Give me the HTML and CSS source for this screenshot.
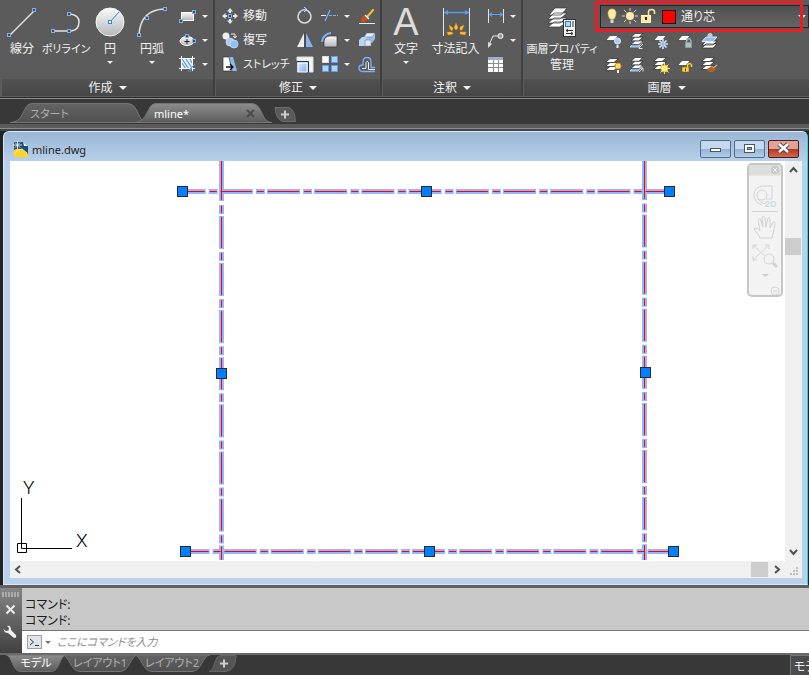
FILE: index.html
```html
<!DOCTYPE html>
<html lang="ja">
<head>
    <meta charset="utf-8">
    <title>mline.dwg</title>
    <link rel="stylesheet" href="styles.css">
</head>
<body>
    <!-- shared shapes -->
    <svg class="defs" width="0" height="0">
        <defs>
            <linearGradient id="silver" x1="0" y1="0" x2="0" y2="1"><stop offset="0" stop-color="#fafafa"/><stop offset="1" stop-color="#b4b6ba"/></linearGradient>
            <linearGradient id="tabOff" x1="0" y1="0" x2="0" y2="1"><stop offset="0" stop-color="#646464"/><stop offset="1" stop-color="#505050"/></linearGradient>
            <linearGradient id="tabOn" x1="0" y1="0" x2="0" y2="1"><stop offset="0" stop-color="#8c8c8c"/><stop offset="1" stop-color="#5c5c5c"/></linearGradient>
            <linearGradient id="sky" x1="0" y1="0" x2="1" y2="1"><stop offset="0" stop-color="#dcecff"/><stop offset="1" stop-color="#82aee6"/></linearGradient>
            <symbol id="pt" viewBox="0 0 4 4"><rect x="0.5" y="0.5" width="3" height="3" fill="#4b4b4b" stroke="#78b0ff"/></symbol>
            <symbol id="sheet" viewBox="0 0 14 6"><path d="M5 .5H13.5L9 5.5H.5Z" fill="#fff" stroke="#222" stroke-width=".6"/></symbol>
            <symbol id="sheets" viewBox="0 0 14 13">
                <path d="M5 8.500H13.500L9 12.500H.5Z" fill="#fff" stroke="#222" stroke-width=".7"/>
                <path d="M5 4.500H13.500L9 8.500H.5Z" fill="#fff" stroke="#222" stroke-width=".7"/>
                <path d="M5 .5H13.500L9 4.500H.5Z" fill="#fff" stroke="#222" stroke-width=".7"/>
            </symbol>
            <symbol id="tab" viewBox="0 0 138 20"><path d="M0 19.500C10 19 11 13 15 6Q17 .5 23 .5H118Q123 .5 126 6C130 14 131 19 138 19.500Z"/></symbol>
            <symbol id="ltab" viewBox="0 0 76 17" preserveAspectRatio="none"><path d="M0 0C8 1 8 16 18 16.500H58C68 16 68 1 76 0Z"/></symbol>
        </defs>
    </svg>

    <div class="ribbon">
        <section class="panel draw">
            <div class="tools">
                <button class="big">
                    <svg width="32" height="32"><path d="M4 29L28 5" stroke="#e4e4e4" stroke-width="1.500"/><use href="#pt" x="1" y="27" width="4" height="4"/><use href="#pt" x="26" y="2" width="4" height="4"/></svg>
                    <span>線分</span>
                </button>
                <button class="big">
                    <svg width="32" height="32"><path d="M2 25H21Q29 24 29 16Q29 9 20 8" fill="none" stroke="#e4e4e4" stroke-width="1.500"/><use href="#pt" x="1" y="23" width="4" height="4"/><use href="#pt" x="17" y="23" width="4" height="4"/><use href="#pt" x="17" y="6" width="4" height="4"/></svg>
                    <span class="kana">ポリライン</span>
                </button>
                <button class="big">
                    <svg width="32" height="32"><circle cx="16" cy="16" r="14" fill="url(#silver)" stroke="#f4f4f4"/><path d="M16 16L25 6" stroke="#3c7fe0"/><rect x="14.500" y="14.500" width="3" height="3" fill="#fff" stroke="#3c7fe0"/></svg>
                    <span>円</span><i class="caret"></i>
                </button>
                <button class="big">
                    <svg width="32" height="32"><path d="M3 28Q5 4 28 3" fill="none" stroke="#e4e4e4" stroke-width="1.500"/><use href="#pt" x="1" y="27" width="4" height="4"/><use href="#pt" x="9" y="10" width="4" height="4"/><use href="#pt" x="27" y="1" width="4" height="4"/></svg>
                    <span>円弧</span><i class="caret"></i>
                </button>
                <div class="stack">
                    <button class="small"><svg width="18" height="18"><rect x="2.500" y="5.500" width="12" height="8" fill="url(#silver)" stroke="#fff"/><use href="#pt" x="0" y="12" width="4" height="4"/><use href="#pt" x="13" y="3" width="4" height="4"/></svg><i class="caret"></i></button>
                    <button class="small"><svg width="18" height="18"><ellipse cx="8" cy="10" rx="7" ry="4.500" fill="url(#silver)" stroke="#fff"/><path d="M8 8v5M5.500 10.500h5" stroke="#222"/><use href="#pt" x="6" y="3" width="4" height="4"/><use href="#pt" x="13" y="8" width="4" height="4"/></svg><i class="caret"></i></button>
                    <button class="small"><svg width="18" height="18"><rect x="3" y="4" width="10" height="10" fill="#e8f1ff"/><path d="M3 8L7 14M3 4L10 14M7 4L13 13M11 4L13 8" stroke="#6297e6" stroke-width="1.300"/><path d="M0 3.500H16M2.500 1V16M13.500 1V16M0 13.500H16" stroke="#fff"/><path d="M9 16L16 9M11 17L13 12" stroke="#6297e6"/></svg><i class="caret"></i></button>
                </div>
            </div>
            <button class="title">作成<i class="caret wide"></i></button>
        </section>

        <section class="panel modify">
            <div class="tools">
                <div class="stack labels">
                    <button class="small"><svg width="18" height="18"><path d="M9 1L12 4.500H10V6H8V4.500H6ZM9 17L6 13.500H8V12H10V13.500H12ZM1 9L4.500 6V8H6V10H4.500V12ZM17 9L13.500 12V10H12V8H13.500V6Z" fill="#e8e8e8"/><rect x="7.500" y="7.500" width="3" height="3" fill="#444" stroke="#78b0ff"/></svg><span>移動</span></button>
                    <button class="small"><svg width="18" height="18"><circle cx="5" cy="5" r="3.500" fill="#eee"/><circle cx="9" cy="11" r="4" fill="#a9ccfa" stroke="#d8e8ff" stroke-width=".7"/><circle cx="13" cy="13" r="4" fill="#8ebcf5" stroke="#d8e8ff" stroke-width=".7"/><path d="M10 3H14V7M12 5L14 7L16 5" fill="none" stroke="#eee"/></svg><span>複写</span></button>
                    <button class="small"><svg width="18" height="18"><path d="M2 2H8V16H2Z" fill="#fff"/><path d="M8 2H12L16 16H8Z" fill="#8db9f0"/><path d="M2 2H8L11 16H2Z" fill="#fff" stroke="#333" stroke-width=".7"/><path d="M5 12H12M9 9L12 12L9 15" fill="none" stroke="#111" stroke-width="1.300"/></svg><span class="kana">ストレッチ</span></button>
                </div>
                <div class="stack">
                    <button class="small"><svg width="18" height="18"><path d="M5 4A6.500 6.500 0 1 0 12 4" fill="none" stroke="#ddd" stroke-width="1.500"/><path d="M5 4Q8 1.500 12 4" fill="none" stroke="#aaccff" stroke-width="1.500"/><path d="M8 0L11 2.500L8 5" fill="none" stroke="#ddd"/></svg></button>
                    <button class="small"><svg width="18" height="18"><path d="M8 2V16H1Z" fill="#eee"/><path d="M10 2V16H17Z" fill="#85b5f2"/><path d="M9 1V17" stroke="#333" stroke-width=".6"/></svg></button>
                    <button class="small"><svg width="18" height="18"><rect x="1" y="2" width="16" height="15" fill="#8db9f0"/><path d="M1 2H17V17H13V6H1Z" fill="#f4f4f4" stroke="#ddd"/><rect x="2" y="8" width="9" height="9" fill="url(#sky)" stroke="#fff"/><path d="M1 6.500H12.500V17" fill="none" stroke="#333"/></svg></button>
                </div>
                <div class="stack">
                    <button class="small"><svg width="18" height="18"><path d="M0 8.500H5" stroke="#eee"/><path d="M8 8.500H17" stroke="#78b0ff" stroke-dasharray="3 1"/><path d="M4 14L9 3" stroke="#78b0ff" stroke-width="1.200"/></svg><i class="caret"></i></button>
                    <button class="small"><svg width="18" height="18"><path d="M3 16V10Q4 5 9 5H16V16Z" fill="url(#silver)" stroke="#333" stroke-width=".7"/><path d="M1 11Q2 3 10 2" fill="none" stroke="#78b0ff" stroke-width="2"/></svg><i class="caret"></i></button>
                    <button class="small"><svg width="18" height="18"><rect x="1.500" y="1.500" width="6" height="6" fill="#fff" stroke="#ddd"/><path d="M10.500 1.500H16.500V7.500H10.500ZM1.500 10.500H7.500V16.500H1.500ZM10.500 10.500H16.500V16.500H10.500Z" fill="#b3d3ff" stroke="#5d9bed"/></svg><i class="caret"></i></button>
                </div>
                <div class="stack">
                    <button class="small"><svg width="18" height="18"><path d="M1 16.500H17" stroke="#eee"/><path d="M8 9L15 1L17 3L10 11Z" fill="#f2b84b" stroke="#333" stroke-width=".5"/><path d="M6 8L10 12L7 15H3V12Z" fill="#c8501b"/><path d="M7 8L11 12" stroke="#fff" stroke-width="1.500"/></svg></button>
                    <button class="small"><svg width="18" height="18"><path d="M6 6L9 2H17V8L14 12H6Z" fill="#9ac1f4"/><path d="M6 6L9 2H17L14 6Z" fill="#e8f0fb" stroke="#5b6b80" stroke-width=".5"/><path d="M1 9L4 6H9L7 9V15H1Z" fill="#b9d4f7"/><path d="M7 9H13V15H7Z" fill="#dfe6ef" stroke="#7b8ba5" stroke-width=".6"/></svg></button>
                    <button class="small"><svg width="18" height="18"><path d="M1 12.500Q1 10 5 10V7Q5 2.500 9 2.500T13 7V12.500H17M1 12.500Q1 16.500 5 16.500H17" fill="none" stroke="#78b0ff" stroke-width="1.300"/><path d="M4 13.500H8V7.500Q9 5 10.500 7.500V14.500H17" fill="none" stroke="#eee"/></svg></button>
                </div>
            </div>
            <button class="title">修正<i class="caret wide"></i></button>
        </section>

        <section class="panel annotate">
            <div class="tools">
                <button class="big">
                    <span class="letter">A</span>
                    <span>文字</span><i class="caret"></i>
                </button>
                <button class="big">
                    <svg width="32" height="32"><path d="M3.500 2V30M29.500 2V30" stroke="#e4e4e4"/><path d="M4 6.500H29" stroke="#5b9cf5" stroke-width="1.500"/><path d="M4 6.500L8 4V9ZM29 6.500L25 4V9Z" fill="#5b9cf5"/><path d="M16 17L18 22L16 24L14 22ZM9 19L13 22L12 25L10 23ZM24 19L22 24L20 24L20 21ZM7 26L12 26L13 28L8 29ZM26 26L20 26L20 28L25 29Z" fill="#ffc52f" stroke="#f27f13" stroke-width=".5"/></svg>
                    <span>寸法記入</span>
                </button>
                <div class="stack">
                    <button class="small"><svg width="18" height="18"><path d="M1.500 2V16M16.500 2V16" stroke="#e4e4e4"/><path d="M2 7.500H16" stroke="#5b9cf5"/><path d="M2 7.500L5 5V10ZM16 7.500L13 5V10Z" fill="#5b9cf5"/></svg><i class="caret"></i></button>
                    <button class="small"><svg width="18" height="18"><path d="M2 14L6 5H11" fill="none" stroke="#e4e4e4"/><path d="M1 17V11L5 13Z" fill="#ddd"/><circle cx="13.500" cy="5" r="2.500" fill="#999" stroke="#fff"/></svg><i class="caret"></i></button>
                    <button class="small"><svg width="18" height="18"><rect x="1" y="2" width="15" height="15" fill="#fff"/><rect x="1" y="2" width="15" height="3" fill="#a3adc4"/><path d="M1 8.500H16M1 12.500H16M6.500 5V17M11.500 5V17" stroke="#8d8d8d"/></svg></button>
                </div>
            </div>
            <button class="title">注釈<i class="caret wide"></i></button>
        </section>

        <section class="panel layers">
            <div class="tools">
                <button class="big two">
                    <svg width="32" height="32"><path d="M8 16H21L14 21H2ZM8 12H21L14 17H2ZM8 7H21L14 13H2ZM9 2H21L15 9H3Z" fill="#fff" stroke="#333" stroke-width=".7"/><rect x="17.500" y="13.500" width="12" height="17" fill="#f3f3f3" stroke="#333"/><rect x="19.500" y="15.500" width="5" height="5" fill="#b8d4fa" stroke="#3b70c2"/><path d="M26 16H28M26 18H28M26 20H28M20 24.500H27M20 27.500H27M22 23L20 24.500L22 26M25 26L27 27.500L25 29" fill="none" stroke="#333"/></svg>
                    <span class="kana">画層プロパティ</span><span>管理</span>
                </button>
                <div class="layer-tools">
                    <div class="layer-box">
                        <svg width="18" height="18"><path d="M9 1Q13 1 13 5.500Q13 8 11 11H7Q5 8 5 5.500Q5 1 9 1Z" fill="#ffeaa1" stroke="#e3c25c" stroke-width=".6"/><path d="M7.500 11.500H10.500V15H7.500Z" fill="#d8d8d8"/></svg>
                        <svg width="18" height="18"><circle cx="9" cy="8" r="4" fill="#ffecae"/><path d="M9 0V3M9 13V16M1 8H4M14 8H17M3 2L5.500 4.500M13 12L15 14M15 2L12.500 4.500M5 12L3 14" stroke="#e0d8bd"/></svg>
                        <svg width="18" height="18"><rect x="2.500" y="7.500" width="9" height="7" fill="#ffe89b" stroke="#fff2c4"/><path d="M9.500 7V4Q9.500 1.500 12.500 1.500T15.500 4V6" fill="none" stroke="#ffe89b" stroke-width="1.500"/><path d="M7 9V12" stroke="#222" stroke-width="2"/></svg>
                        <i class="swatch"></i>
                        <select aria-label="画層"><option>通り芯</option></select>
                        <i class="caret wide"></i>
                        <div class="callout"></div>
                    </div>
                    <div class="layer-icons">
                        <button><svg width="18" height="18"><use href="#sheet" x="0" y="2" width="14" height="6"/><circle cx="12.500" cy="8" r="3" fill="#a5cbf8" stroke="#e3efff"/><path d="M12.500 12V15" stroke="#eee" stroke-width="2"/></svg></button>
                        <button><svg width="18" height="18"><path d="M5 9.500H13L9 14H1Z" fill="#70a9f3" stroke="#dce9fb" stroke-width=".8"/><use href="#sheets" x="1" y="0" width="14" height="12"/><path d="M14 11L10 15M10 12V15.500H13.500" fill="none" stroke="#ddd"/></svg></button>
                        <button><svg width="18" height="18"><use href="#sheet" x="0" y="2" width="14" height="6"/><path d="M10 6V16M5 11H15M6.500 7.500L13.500 14.500M13.500 7.500L6.500 14.500" stroke="#d8eaff" stroke-width="1.600"/><path d="M10 8V14M7 11H13" stroke="#5c94d8" stroke-width=".7"/></svg></button>
                        <button><svg width="18" height="18"><use href="#sheet" x="0" y="2" width="14" height="6"/><path d="M9.500 10V8Q12 3 14 8V10" fill="none" stroke="#a9b9b8" stroke-width="1.500"/><rect x="8" y="9" width="7" height="6" fill="#7fa09f"/><path d="M9 11H14M9 13H14" stroke="#d7e3e1"/></svg></button>
                        <button><svg width="18" height="18"><path d="M5 11H16L12 15H1ZM5 8H16L12 12H1Z" fill="#fff" stroke="#222" stroke-width=".7"/><path d="M5 4H16L12 8.500H1Z" fill="#8dbcf7" stroke="#fff" stroke-width=".8"/><circle cx="9" cy="2.500" r="2.500" fill="#c9cbd0"/></svg></button>
                        <button><svg width="18" height="18"><use href="#sheets" x="0" y="1" width="14" height="13"/><circle cx="13" cy="9" r="3" fill="#ffe15a" stroke="#f08a18"/><path d="M13 13V16" stroke="#eee" stroke-width="2"/></svg></button>
                        <button><svg width="18" height="18"><path d="M5 9.500H13L9 14H1Z" fill="#70a9f3" stroke="#dce9fb" stroke-width=".8"/><use href="#sheets" x="1" y="0" width="14" height="12"/><path d="M10 15L14 11M10.500 11H14V14.500" fill="none" stroke="#ddd"/></svg></button>
                        <button><svg width="18" height="18"><use href="#sheets" x="0" y="0" width="14" height="13"/><path d="M11.500 6V17M6 11.500H17M7.500 7.500L15.500 15.500M15.500 7.500L7.500 15.500" stroke="#ffe164"/><circle cx="11.500" cy="11.500" r="3.500" fill="#fff18a" stroke="#f2bd26"/></svg></button>
                        <button><svg width="18" height="18"><use href="#sheet" x="0" y="3" width="14" height="6"/><rect x="5" y="10" width="7" height="5" fill="#ffd23a" stroke="#7a5c00" stroke-width=".6"/><path d="M10.500 10V8Q13 5 14.500 8V10" fill="none" stroke="#ffd23a" stroke-width="1.500"/><path d="M8.500 11.500V14" stroke="#333"/></svg></button>
                        <button><svg width="18" height="18"><use href="#sheets" x="0" y="0" width="14" height="13"/><path d="M6 12L11 9L15 12L12 15L8 15Z" fill="#b86024"/><path d="M12 11L16 8" stroke="#e7a46c" stroke-width="1.500"/></svg></button>
                    </div>
                </div>
            </div>
            <button class="title">画層<i class="caret wide"></i></button>
        </section>
    </div>

    <nav class="file-tabs">
        <a class="file-tab" href="#"><svg class="tab-bg" width="138" height="20"><use href="#tab"/></svg><span class="kana">スタート</span></a>
        <a class="file-tab active" href="#"><svg class="tab-bg" width="138" height="20"><use href="#tab"/></svg><span class="latin">mline*</span><svg class="tab-close" width="9" height="9"><path d="M1 1L8 8M8 1L1 8" stroke="#4a4a4a" stroke-width="2"/></svg></a>
        <button class="add-tab" aria-label="新規"><svg width="22" height="15"><path d="M1 .5H15Q21 3 21.500 14.500H9Q2 13 1 .5Z" fill="#5a5a5a" stroke="#6e6e6e"/><path d="M7 7.500H15M11 3.500V11.500" stroke="#ccc" stroke-width="2"/></svg></button>
    </nav>

    <main class="workspace">
        <div class="window">
            <header class="window-bar">
                <svg width="16" height="16"><path d="M1 1H10L15 5V15H1Z" fill="#1f4d7c"/><path d="M10 1L15 5H11Z" fill="#e9eef4"/><path d="M1 9Q7 5 15 13V16H1Z" fill="#ffd51f"/><path d="M1 13Q5 8 9 8L14 12" fill="none" stroke="#fff1a0"/><path d="M4.500 0V8M0 4H9M2 1.500L7 6.500M7 1.500L2 6.500" stroke="#fff" stroke-width=".8"/></svg>
                <h1 class="latin">mline.dwg</h1>
                <button class="win-btn" aria-label="最小化"><svg width="13" height="13"><rect x="1.500" y="6.500" width="10" height="3" fill="#fff" stroke="#4b5664"/></svg></button>
                <button class="win-btn" aria-label="最大化"><svg width="13" height="13"><rect x="1.500" y="2.500" width="10" height="8" fill="#fff" stroke="#4b5664"/><rect x="4.500" y="5.500" width="4" height="2" fill="#8eb2d8" stroke="#4b5664"/></svg></button>
                <button class="win-btn close" aria-label="閉じる"><svg width="13" height="13"><path d="M2 2L11 10M11 2L2 10" stroke="#58484b" stroke-width="4.500"/><path d="M2 2L11 10M11 2L2 10" stroke="#fff" stroke-width="2.500"/></svg></button>
            </header>

            <div class="view">
                <div class="canvas">
                    <svg class="drawing" width="775" height="399">
                        <!-- selection glow -->
                        <g class="glow">
                            <path d="M172 30.500H660" stroke-dasharray="33.200 3 9 2" stroke-dashoffset="9.500"/>
                            <path d="M175 390.500H663" stroke-dasharray="33.100 3 9 2" stroke-dashoffset="8.500"/>
                            <path d="M211.500 0V40"/>
                            <path d="M211.500 43V399" stroke-dasharray="33.100 3 9 2" stroke-dashoffset="35.200"/>
                            <path d="M634.500 0V39"/>
                            <path d="M634.500 42V399" stroke-dasharray="33.100 3 9 2" stroke-dashoffset="35.600"/>
                        </g>
                        <!-- center lines -->
                        <g class="center">
                            <path d="M172 30.500H660" stroke-dasharray="31.200 5 7 4" stroke-dashoffset="8.500"/>
                            <path d="M175 390.500H663" stroke-dasharray="31.100 5 7 4" stroke-dashoffset="7.500"/>
                            <path d="M211.500 0V39"/>
                            <path d="M211.500 43V399" stroke-dasharray="31.100 5 7 4" stroke-dashoffset="34.200"/>
                            <path d="M634.500 0V38"/>
                            <path d="M634.500 42V399" stroke-dasharray="31.100 5 7 4" stroke-dashoffset="34.600"/>
                        </g>
                        <!-- grips -->
                        <g class="grips">
                            <rect x="167.500" y="25.500" width="10" height="10"/>
                            <rect x="411.500" y="25.500" width="10" height="10"/>
                            <rect x="654.500" y="25.500" width="10" height="10"/>
                            <rect x="206.500" y="207.500" width="10" height="10"/>
                            <rect x="630.500" y="206.500" width="10" height="10"/>
                            <rect x="170.500" y="385.500" width="10" height="10"/>
                            <rect x="414.500" y="385.500" width="10" height="10"/>
                            <rect x="658.500" y="385.500" width="10" height="10"/>
                        </g>
                        <!-- UCS icon -->
                        <path d="M11.500 337V387.500H62M7.500 382.500H16.500V391.500H7.500Z" fill="none" stroke="#000"/>
                        <text class="axis" x="13" y="333">Y</text>
                        <text class="axis" x="66" y="386">X</text>
                    </svg>

                    <div class="navbar">
                        <svg width="36" height="135">
                            <rect x="1" y="1" width="34" height="132" rx="4" fill="#f3f3f3" stroke="#c6c6c6" stroke-width="2"/>
                            <path d="M2 12.500V5Q2 2 5 2H31Q34 2 34 5V12.500Z" fill="#dedede"/>
                            <circle cx="28" cy="7" r="4" fill="#c8c8c8"/><path d="M26 5L30 9M30 5L26 9" stroke="#f5f5f5"/>
                            <g fill="none" stroke="#d2d2d2">
                                <path d="M15 42C4 39 4 23 17 23H25V36H19"/><circle cx="15" cy="32" r="5"/><path d="M11 36Q14 41 19 41"/>
                                <path d="M5 48.500H31"/>
                                <path d="M13 75C11 69 6 68 8 65Q10 64 13 68L11 57Q13 54 14 58L16 64L15 54Q17 52 18 55L19 64L21 55Q23 53 23 57L23 65L26 59Q29 58 28 62L25 75Z"/>
                                <path d="M6 82L22 97M22 82L6 97M6 86V82H10M18 82H22V86M6 93V97H10"/>
                                <circle cx="22" cy="96" r="5" fill="#f3f3f3"/><path d="M26 100L30 104" stroke-width="3"/>
                                <circle cx="28" cy="128" r="4"/><path d="M26 128H30"/>
                            </g>
                            <path d="M15 111H22L18.500 114Z" fill="#ccc"/>
                            <text x="18" y="44" class="nav-2d">2D</text>
                        </svg>
                    </div>
                </div>
                <div class="vscroll">
                    <svg width="17" height="17"><path d="M5 11L8.500 7L12 11" fill="none" stroke="#505050" stroke-width="2"/></svg>
                    <div class="vthumb"></div>
                    <svg width="17" height="17"><path d="M5 6L8.500 10L12 6" fill="none" stroke="#505050" stroke-width="2"/></svg>
                </div>
                <div class="hscroll">
                    <svg width="17" height="17"><path d="M10 5L6 8.500L10 12" fill="none" stroke="#505050" stroke-width="2"/></svg>
                    <div class="hthumb"></div>
                    <svg width="17" height="17"><path d="M7 5L11 8.500L7 12" fill="none" stroke="#505050" stroke-width="2"/></svg>
                </div>
                <svg class="sizer" width="17" height="17"><path d="M11 6h2v2h-2zM8 9h2v2h-2zM11 9h2v2h-2zM5 12h2v2h-2zM8 12h2v2h-2zM11 12h2v2h-2z" fill="#bdbdbd"/></svg>
            </div>
        </div>
    </main>

    <section class="command">
        <div class="command-side">
            <i class="grip"></i>
            <button aria-label="閉じる"><svg width="11" height="11"><path d="M1.500 1.500L9.500 9.500M9.500 1.500L1.500 9.500" stroke="#eee" stroke-width="2"/></svg></button>
            <button aria-label="カスタマイズ"><svg width="14" height="14"><path d="M4 1Q8 0 8 5L13 10Q14 13 11 13L5 8Q1 8 .5 4L3 6L5.500 5.500L6 3Z" fill="#eee"/></svg></button>
        </div>
        <div class="command-main">
            <div class="history"><p>コマンド:</p><p>コマンド:</p></div>
            <div class="prompt">
                <svg width="16" height="16"><rect x=".5" y="1.500" width="14" height="13" fill="#e1e5ea" stroke="#9ca1a8"/><path d="M3 5L6.500 8L3 11M8 11.500H12" fill="none" stroke="#333"/></svg>
                <i class="caret"></i>
                <input type="text" class="kana" aria-label="コマンド" placeholder="ここにコマンドを入力">
            </div>
        </div>
    </section>

    <footer class="layout-tabs">
        <a class="layout-tab active" href="#"><svg class="tab-bg" width="60" height="17"><use href="#ltab"/></svg><span>モデル</span></a>
        <a class="layout-tab" href="#"><svg class="tab-bg" width="76" height="17"><use href="#ltab"/></svg><span>レイアウト1</span></a>
        <a class="layout-tab" href="#"><svg class="tab-bg" width="76" height="17"><use href="#ltab"/></svg><span>レイアウト2</span></a>
        <button class="add-layout" aria-label="レイアウトを追加"><svg width="28" height="17"><path d="M0 16.500C7 15 4 1 12 .5H27Q27 15 17 16.500Z" fill="#555" stroke="#666"/><path d="M11 8.500H19M15 4.500V12.500" stroke="#ccc" stroke-width="2"/></svg></button>
        <button class="model-space">モデル</button>
    </footer>
</body>
</html>
```
FILE: styles.css
```css
* {
    box-sizing: border-box;
}
body {
    margin: 0;
    height: 100vh;
    display: flex;
    flex-direction: column;
    overflow: hidden;
    background: #383838;
    color: #f0f0f0;
    font: 12px/16px "Noto Sans", "Noto Sans CJK JP", sans-serif;
    font-feature-settings: "palt";
}
button, input, select {
    font: inherit;
    font-feature-settings: inherit;
    color: inherit;
    background: none;
    border: 0;
    padding: 0;
    margin: 0;
}
svg {
    display: block;
    flex: none;
}
a {
    color: inherit;
    text-decoration: none;
}
.defs {
    position: absolute;
}
.kana, .latin {
    font-size: 11px;
}
.caret {
    flex: none;
    width: 0;
    height: 0;
    border: 3px solid transparent;
    border-top: 3px solid #f0f0f0;
    border-bottom: 0;
}
.caret.wide {
    border-width: 4px 4px 0;
}

/* ribbon */
.ribbon {
    flex: none;
    display: flex;
    height: 99px;
    padding: 0 0 2px 2px;
    background: #5b5b5b;
    border-bottom: 1px solid #8c8c8c;
    box-shadow: inset 0 -1px #2a2a2a;
}
.panel {
    display: flex;
    flex-direction: column;
    border-right: 2px solid #404040;
    margin-right: 1px;
}
.panel.layers {
    flex: 1;
    border: 0;
    margin: 0;
}
.tools {
    flex: 1;
    display: flex;
}
.draw .tools {
    display: grid;
    grid-template-columns: 40px 48px 40px 44px 39px;
}
.modify .tools {
    display: grid;
    grid-template-columns: 75px 25px 37px 27px;
}
.annotate .tools {
    display: grid;
    grid-template-columns: 46px 53px 39px;
}
.title {
    height: 17px;
    display: flex;
    align-items: center;
    justify-content: center;
    gap: 6px;
    background: linear-gradient(#525252, #464646);
}
.big {
    display: flex;
    flex-direction: column;
    align-items: center;
    padding-top: 6px;
    white-space: nowrap;
}
.big svg, .letter {
    height: 32px;
    margin-bottom: 3px;
}
.big .caret {
    margin-top: 4px;
}
.big.two {
    width: 76px;
}
.letter {
    font: 38px/32px "Liberation Sans", sans-serif;
    color: #ddd;
}
.stack {
    display: flex;
    flex-direction: column;
    padding: 4px 0 0 5px;
}
.small {
    height: 24px;
    display: flex;
    align-items: center;
    gap: 5px;
    white-space: nowrap;
}
.labels .small {
    gap: 4px;
}

.layer-tools {
    flex: 1;
}
.layer-box {
    position: relative;
    height: 23px;
    margin-top: 5px;
    padding: 0 2px;
    display: flex;
    align-items: center;
    background: linear-gradient(#505050, #656565);
    border: 1px solid #262626;
}
.swatch {
    width: 14px;
    height: 14px;
    margin: 0 5px;
    background: #f00;
    border: 1px solid #111;
}
.layer-box select {
    flex: 1;
    appearance: none;
}
.callout {
    position: absolute;
    left: -6px;
    right: 5px;
    top: -5px;
    height: 31px;
    border: 3px solid #ed1c24;
    pointer-events: none;
}
.layer-icons {
    display: grid;
    grid-template-columns: repeat(5, 24px);
    grid-auto-rows: 24px;
    padding: 2px 0 0 5px;
}
.layer-icons button {
    display: flex;
    align-items: center;
}

/* drawing tabs */
.file-tabs {
    flex: none;
    height: 32px;
    padding: 4px 0 0 10px;
    display: flex;
    align-items: flex-start;
    background: linear-gradient(#383838 25px, #5b5b5b 25px, #5b5b5b 29px, #8c8c8c 29px, #8c8c8c 30px, #444 30px);
}
.file-tab {
    position: relative;
    width: 124px;
    height: 21px;
    padding: 3px 0 0 20px;
    color: #b0b0b0;
}
.tab-bg {
    position: absolute;
    left: 0;
    top: 0;
    z-index: -1;
    fill: url(#tabOff);
    stroke: #757575;
}
.file-tab, .layout-tab {
    z-index: 0;
}
.file-tab.active, .layout-tab.active {
    z-index: 1;
    color: #fff;
}
.active .tab-bg {
    fill: url(#tabOn);
}
.file-tab.active {
    width: 138px;
    display: flex;
    align-items: flex-start;
    justify-content: space-between;
    padding-right: 17px;
}
.tab-close {
    margin-top: 3px;
}
.add-tab {
    margin: 4px 0 0 2px;
}

/* document window */
.workspace {
    flex: 1;
    min-height: 0;
    display: flex;
    padding: 0 1px 0 3px;
    background: #222;
}
.window {
    flex: 1;
    min-width: 0;
    display: flex;
    flex-direction: column;
    padding: 0 5px 6px 6px;
    background: linear-gradient(#9ab6d5, #b9d1ea 30px);
    border: 1px solid #d9e9fa;
    border-right-color: #32d2e6;
    border-radius: 6px 6px 0 0;
}
.window-bar {
    height: 29px;
    display: flex;
    align-items: center;
    gap: 3px;
    padding: 4px 3px 0 3px;
    color: #1e1e1e;
}
.window-bar h1 {
    flex: 1;
    margin: 0;
    padding-top: 2px;
    font-weight: normal;
}
.win-btn {
    width: 31px;
    height: 18px;
    display: flex;
    align-items: center;
    justify-content: center;
    background: linear-gradient(#c5d9ee 50%, #92b3d6 50%, #b2cde8);
    border: 1px solid #526d8b;
    border-radius: 2px;
}
.win-btn.close {
    background: linear-gradient(#e2a294 50%, #b8331c 50%, #d06a4f);
    border-color: #4c1a1a;
}
.view {
    flex: 1;
    min-height: 0;
    display: grid;
    grid-template-columns: 1fr 17px;
    grid-template-rows: 1fr 17px;
    background: #f0f0f0;
}
.canvas {
    position: relative;
    min-width: 0;
    min-height: 0;
    overflow: hidden;
    background: #fff;
}
.glow {
    fill: none;
    stroke: #2a70ff;
    stroke-width: 5;
    opacity: 0.5;
}
.center {
    fill: none;
    stroke: #f00;
}
.grips {
    fill: #0080ff;
    stroke: #2b2b2b;
}
.axis {
    font: 300 19px Roboto, "Liberation Sans", sans-serif;
    fill: #000;
}
.navbar {
    position: absolute;
    right: 2px;
    top: 2px;
}
.nav-2d {
    font: bold 9px "Liberation Sans", sans-serif;
    fill: #cfd8e2;
}
.vscroll {
    display: flex;
    flex-direction: column;
}
.vthumb {
    height: 17px;
    margin: 60px 1px auto 0;
    background: #cdcdcd;
}
.hscroll {
    display: flex;
}
.hthumb {
    width: 17px;
    margin: 1px 0 1px auto;
    background: #cdcdcd;
}

/* command line */
.command {
    flex: none;
    display: flex;
    border-top: 3px solid #606060;
    border-bottom: 2px solid #6a6a6a;
}
.command-side {
    width: 22px;
    padding-right: 2px;
    display: flex;
    flex-direction: column;
    align-items: center;
    background: linear-gradient(#858585, #414141);
}
.command-side button {
    margin-bottom: 10px;
}
.grip {
    width: 17px;
    height: 5px;
    margin: 4px 0 7px;
    background: repeating-linear-gradient(90deg, #aaa 0 2px, transparent 2px 3px);
}
.command-main {
    flex: 1;
}
.history {
    height: 43px;
    padding: 9px 3px 0;
    background: #c8c8c8;
    border-bottom: 1px solid #777;
    color: #1a1a1a;
}
.history p {
    margin: 0;
}
.prompt {
    height: 22px;
    padding-left: 5px;
    display: flex;
    align-items: center;
    gap: 2px;
    background: #fff;
}
.prompt .caret {
    border-top-color: #777;
}
.prompt input {
    flex: 1;
    padding-left: 4px;
    color: #222;
    font-style: italic;
}
.prompt input::placeholder {
    color: #8b8b8b;
}

/* layout tabs */
.layout-tabs {
    flex: none;
    height: 20px;
    padding-left: 6px;
    display: flex;
    align-items: flex-start;
}
.layout-tab {
    position: relative;
    width: 60px;
    height: 17px;
    margin-right: -4px;
    color: #b0b0b0;
    text-align: center;
    font-size: 11px;
    white-space: nowrap;
}
.layout-tab + .layout-tab {
    width: 76px;
}
.add-layout {
    margin-left: 3px;
}
.model-space {
    width: 19px;
    height: 20px;
    margin-left: auto;
    padding: 2px 0 0 3px;
    overflow: hidden;
    text-align: left;
    background: #4c4c4c;
    border: 1px solid #777;
    border-width: 1px 0 0 1px;
    white-space: nowrap;
}
```
